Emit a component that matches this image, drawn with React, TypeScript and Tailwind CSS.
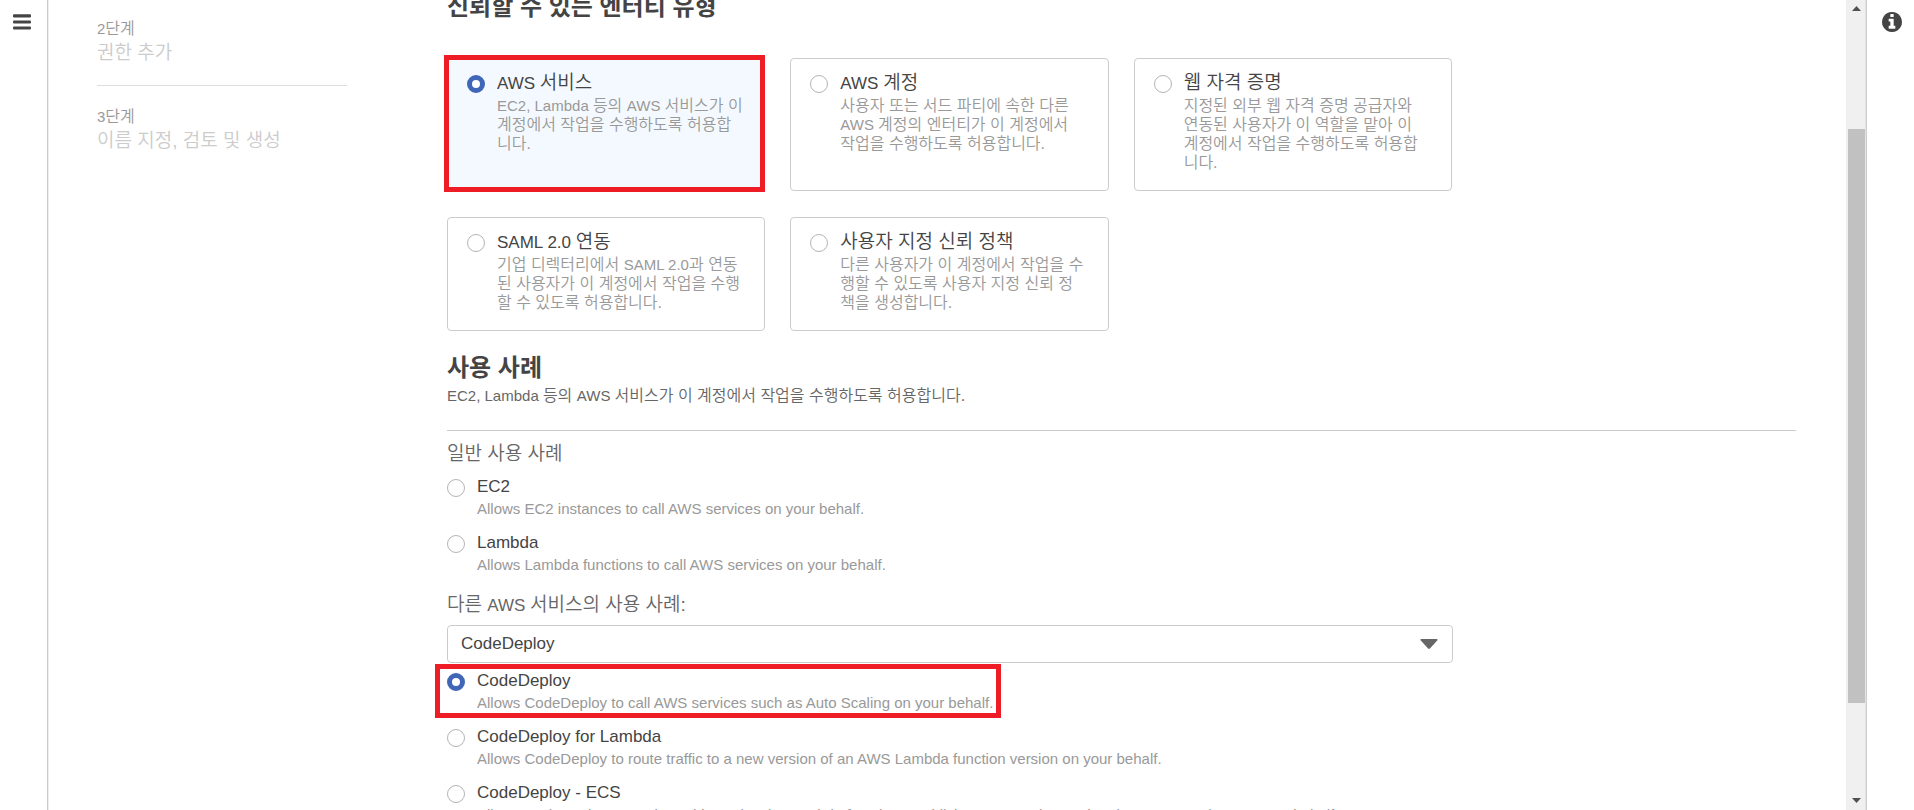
import { useState } from 'react';

type Option = { id: string; title: string; description: string };

const steps = [
  { label: '2단계', name: '권한 추가' },
  { label: '3단계', name: '이름 지정, 검토 및 생성' },
];

const entities: Option[] = [
  { id: 'service', title: 'AWS 서비스', description: 'EC2, Lambda 등의 AWS 서비스가 이\n계정에서 작업을 수행하도록 허용합\n니다.' },
  { id: 'account', title: 'AWS 계정', description: '사용자 또는 서드 파티에 속한 다른\nAWS 계정의 엔터티가 이 계정에서\n작업을 수행하도록 허용합니다.' },
  { id: 'web', title: '웹 자격 증명', description: '지정된 외부 웹 자격 증명 공급자와\n연동된 사용자가 이 역할을 맡아 이\n계정에서 작업을 수행하도록 허용합\n니다.' },
  { id: 'saml', title: 'SAML 2.0 연동', description: '기업 디렉터리에서 SAML 2.0과 연동\n된 사용자가 이 계정에서 작업을 수행\n할 수 있도록 허용합니다.' },
  { id: 'custom', title: '사용자 지정 신뢰 정책', description: '다른 사용자가 이 계정에서 작업을 수\n행할 수 있도록 사용자 지정 신뢰 정\n책을 생성합니다.' },
];

const commonCases: Option[] = [
  { id: 'ec2', title: 'EC2', description: 'Allows EC2 instances to call AWS services on your behalf.' },
  { id: 'lambda', title: 'Lambda', description: 'Allows Lambda functions to call AWS services on your behalf.' },
];

const serviceCases: Option[] = [
  { id: 'codedeploy', title: 'CodeDeploy', description: 'Allows CodeDeploy to call AWS services such as Auto Scaling on your behalf.' },
  { id: 'codedeploy-lambda', title: 'CodeDeploy for Lambda', description: 'Allows CodeDeploy to route traffic to a new version of an AWS Lambda function version on your behalf.' },
  { id: 'codedeploy-ecs', title: 'CodeDeploy - ECS', description: 'Allows CodeDeploy to read S3 objects, invoke Lambda functions, publish to SNS topics, and update ECS services on your behalf.' },
];

const textSizes = {
  small: { latin: 'text-[15px]', hangul: 'text-[16px]' },
  large: { latin: 'text-[17px]', hangul: 'text-[19px]' },
};

/* Hangul is set slightly larger than the Latin text beside it. */
function Mixed({ text, size }: { text: string; size: 'small' | 'large' }) {
  const { latin, hangul } = textSizes[size];
  return (
    <span className={latin}>
      {text.split(/([가-힣][가-힣 .,:]*)/).map((part, i) =>
        i % 2 === 1 ? (
          <span key={i} className={`${hangul} leading-none font-[350]`}>{part}</span>
        ) : (
          part
        ),
      )}
    </span>
  );
}

function Radio({ id, name, checked, onChange }: { id: string; name: string; checked: boolean; onChange: () => void }) {
  return (
    <input
      type="radio"
      id={id}
      name={name}
      checked={checked}
      onChange={onChange}
      className="mt-1 size-[18px] shrink-0 appearance-none rounded-full border border-[#b4b4b4] bg-white checked:border-[5px] checked:border-[#4066b8]"
    />
  );
}

function EntityCard({ option, checked, onSelect }: { option: Option; checked: boolean; onSelect: () => void }) {
  return (
    <div
      className={`relative flex gap-3 rounded-[4px] border border-[#ccc] pt-3 pr-4 pb-[18px] pl-[19px] ${checked ? 'bg-[#f4f9ff]' : 'bg-white'}`}
    >
      <Radio id={option.id} name="entity" checked={checked} onChange={onSelect} />
      <label htmlFor={option.id} className="min-w-0 flex-1">
        <span className="block leading-[25px] text-[#444]">
          <Mixed text={option.title} size="large" />
        </span>
        {option.description.split('\n').map((line) => (
          <span key={line} className="block leading-[19px] text-[#999]">
            <Mixed text={line} size="small" />
          </span>
        ))}
      </label>
      {option.id === 'service' && (
        <div className="pointer-events-none absolute -top-1 -right-px -bottom-0.5 -left-1 border-[5px] border-[#ee1c25]" />
      )}
    </div>
  );
}

function CaseRow({ option, checked, onSelect }: { option: Option; checked: boolean; onSelect: () => void }) {
  return (
    <div className="relative flex gap-3 self-start">
      <Radio id={option.id} name="use-case" checked={checked} onChange={onSelect} />
      <label htmlFor={option.id} className="whitespace-nowrap">
        <span className="block text-[17px] leading-6 text-[#444]">{option.title}</span>
        <span className="block text-[15px] leading-5 text-[#999]">{option.description}</span>
      </label>
      {option.id === 'codedeploy' && (
        <div className="pointer-events-none absolute -top-[5px] -right-2 -bottom-[5px] -left-3 border-[5px] border-[#ee1c25]" />
      )}
    </div>
  );
}

function ScrollTrack() {
  return (
    <div className="flex w-5 shrink-0 flex-col border-r border-[#e4e4e4] bg-[#f0f0f0] pl-0.5" aria-hidden="true">
      <svg className="mx-auto mt-1.5 shrink-0" width="9" height="5" viewBox="0 0 9 5">
        <path d="M4.500 0 9 5H0Z" fill="#505050" />
      </svg>
      <div className="grow-[118]" />
      <div className="grow-[574] bg-[#c1c1c1]" />
      <div className="grow-[95]" />
      <svg className="mx-auto mb-[7px] shrink-0" width="9" height="5" viewBox="0 0 9 5">
        <path d="M0 0h9L4.500 5Z" fill="#505050" />
      </svg>
    </div>
  );
}

export default function App() {
  const [entity, setEntity] = useState('service');
  const [useCase, setUseCase] = useState('codedeploy');

  return (
    <div className="flex h-screen overflow-hidden bg-white font-['Liberation_Sans','Noto_Sans_CJK_KR',sans-serif] text-[#444]">
      <div className="w-12 shrink-0 border-r border-[#ccc] pt-3.5 pl-[13px]">
        <button type="button" aria-label="메뉴" className="block">
          <svg width="18" height="16" viewBox="0 0 18 16" fill="#444">
            <rect y="0.300" width="18" height="3.200" rx="1" />
            <rect y="6.400" width="18" height="3.200" rx="1" />
            <rect y="12.400" width="18" height="3.200" rx="1" />
          </svg>
        </button>
      </div>

      <div className="flex min-w-0 flex-1 border-l border-[#eee] pr-[50px] pl-12">
        <ol className="w-[250px] shrink-0 pt-[19px]">
          {steps.map((step, i) => (
            <li key={step.label} className={i > 0 ? 'mt-[18px] border-t border-[#ddd] pt-[21px]' : ''}>
              <div className="leading-5 text-[#999]">
                <Mixed text={step.label} size="small" />
              </div>
              <div className="mt-0.5 leading-[26px] text-[#ccc]">
                <Mixed text={step.name} size="large" />
              </div>
            </li>
          ))}
        </ol>

        <main className="-mt-2 ml-[100px] flex min-w-0 flex-1 flex-col">
          <h2 className="text-[24px] leading-[30px] font-bold">신뢰할 수 있는 엔터티 유형</h2>
          <div className="mt-9 grid max-w-[1005px] grid-cols-3 gap-x-[25px] gap-y-[26px]">
            {entities.map((option) => (
              <EntityCard key={option.id} option={option} checked={entity === option.id} onSelect={() => setEntity(option.id)} />
            ))}
          </div>

          <h2 className="mt-[22px] text-[24px] leading-[30px] font-bold">사용 사례</h2>
          <p className="mt-[3px] leading-5 text-[#666]">
            <Mixed text="EC2, Lambda 등의 AWS 서비스가 이 계정에서 작업을 수행하도록 허용합니다." size="small" />
          </p>
          <hr className="mt-6 border-[#ccc]" />

          <h3 className="mt-3 leading-6 text-[#666]">
            <Mixed text="일반 사용 사례" size="large" />
          </h3>
          <div className="mt-2 flex flex-col gap-3">
            {commonCases.map((option) => (
              <CaseRow key={option.id} option={option} checked={useCase === option.id} onSelect={() => setUseCase(option.id)} />
            ))}
          </div>

          <label htmlFor="other-service" className="mt-[19px] leading-6 text-[#666]">
            <Mixed text="다른 AWS 서비스의 사용 사례:" size="large" />
          </label>
          <div className="relative mt-[7px] max-w-[1006px]">
            <select
              id="other-service"
              defaultValue="CodeDeploy"
              className="block h-[38px] w-full appearance-none rounded-[4px] border border-[#ccc] bg-white px-[13px] text-[17px] text-[#444]"
            >
              <option>CodeDeploy</option>
            </select>
            <svg className="pointer-events-none absolute top-3.5 right-[15px]" width="18" height="10" viewBox="0 0 18 10">
              <path d="M1 0h16q1.200 0.800 0 1.800L9.900 9.500q-.9.900-1.800 0L1 1.800Q-.2.800 1 0Z" fill="#666" />
            </svg>
          </div>
          <div className="mt-1.5 flex flex-col gap-3">
            {serviceCases.map((option) => (
              <CaseRow key={option.id} option={option} checked={useCase === option.id} onSelect={() => setUseCase(option.id)} />
            ))}
          </div>
        </main>
      </div>

      <ScrollTrack />
      <div className="w-12 shrink-0 border-l border-[#ccc] pt-3 pl-[15px]">
        <button type="button" aria-label="정보" className="block">
          <svg width="20" height="20" viewBox="0 128 1536 1536" fill="#444">
            <path d="M1024 1376v-160q0-14-9-23t-23-9h-96v-512q0-14-9-23t-23-9h-320q-14 0-23 9t-9 23v160q0 14 9 23t23 9h96v320h-96q-14 0-23 9t-9 23v160q0 14 9 23t23 9h448q14 0 23-9t9-23zm-128-896v-160q0-14-9-23t-23-9h-192q-14 0-23 9t-9 23v160q0 14 9 23t23 9h192q14 0 23-9t9-23zm640 416q0 209-103 385.500t-279.500 279.500-385.500 103-385.500-103-279.500-279.500-103-385.500 103-385.500 279.500-279.500 385.500-103 385.500 103 279.500 279.500 103 385.500z" />
          </svg>
        </button>
      </div>
    </div>
  );
}
